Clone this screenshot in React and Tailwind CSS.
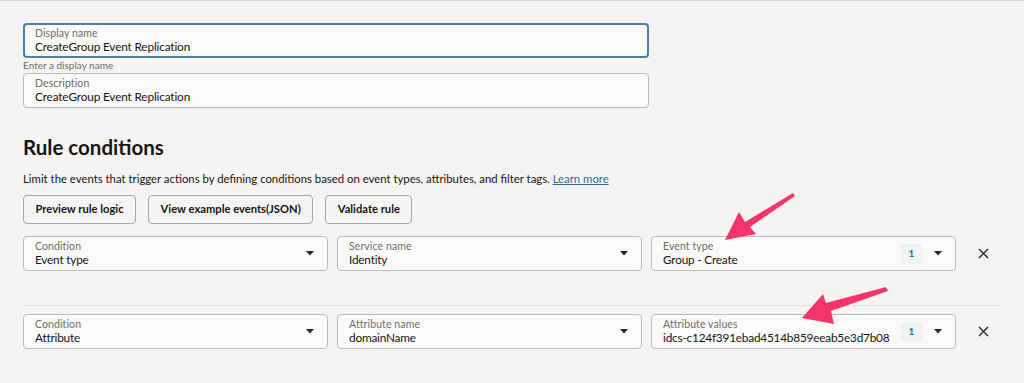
import React from 'react';

const FONT = { fontFamily: 'Lato, "Noto Sans", Arial, sans-serif' };

function Caret() {
    return (
        <svg width="8" height="5" viewBox="0 0 8 5" className="shrink-0">
            <path d="M0 0 L8 0 L4 4.5 Z" fill="#2a2825" />
        </svg>
    );
}

function TextField({ label, value, focused }) {
    return (
        <div
            className={`w-[626px] h-[35px] rounded-[4px] bg-[#fafaf9] flex flex-col justify-center ${focused ? 'border-2 border-[#4d7fa3] pl-[10px]' : 'border border-[#bdbbb7] pl-[11px]'}`}
        >
            <span className="text-[10.5px] leading-[12px] tracking-[0.1px] text-[#6f6c68]">{label}</span>
            <span className="text-[11.8px] leading-[15px] tracking-[-0.15px] text-[#161513]">{value}</span>
        </div>
    );
}

function SelectField({ label, value, count }) {
    return (
        <div className="w-[305px] h-[35px] rounded-[4px] border border-[#bdbbb7] bg-[#fafaf9] flex items-center pl-[11px] pr-[13px]">
            <div className="flex-1 flex flex-col justify-center min-w-0">
                <span className="text-[10.5px] leading-[12px] tracking-[0.1px] text-[#6f6c68]">{label}</span>
                <span className="text-[11.8px] leading-[15px] tracking-[-0.2px] text-[#161513] whitespace-nowrap overflow-hidden">{value}</span>
            </div>
            {count && (
                <span className="w-[21px] h-[20px] ml-[4px] mr-[12px] shrink-0 rounded-[3px] bg-[#eef3f5] text-[#2b6c8c] text-[10px] font-bold flex items-center justify-center">
                    {count}
                </span>
            )}
            <Caret />
        </div>
    );
}

function RemoveButton() {
    return (
        <button className="w-[20px] h-[20px] ml-[8px] flex items-center justify-center">
            <svg width="11" height="11" viewBox="0 0 11 11">
                <path d="M1 1 L10 10 M10 1 L1 10" stroke="#2a2825" strokeWidth="1.4" fill="none" />
            </svg>
        </button>
    );
}

function ConditionRow({ fields }) {
    return (
        <div className="flex items-center gap-[9px]">
            {fields.map(f => (
                <SelectField key={f.label} {...f} />
            ))}
            <RemoveButton />
        </div>
    );
}

export default function App() {
    return (
        <div className="relative w-[1024px] h-[383px] overflow-hidden bg-[#f5f4f2] border-t border-[#d6d4d1]" style={FONT}>
            <div className="pl-[23px] pt-[22px]">
                {/* Display name */}
                <TextField label="Display name" value="CreateGroup Event Replication" focused />
                <p className="text-[10px] leading-[15px] text-[#6f6c68]">Enter a display name</p>
                <TextField label="Description" value="CreateGroup Event Replication" />

                {/* Rule conditions */}
                <h2 className="mt-[27px] text-[20.5px] leading-[24px] font-bold text-[#161513]">Rule conditions</h2>
                <p className="mt-[12px] text-[11.35px] leading-[16px] text-[#161513]">
                    Limit the events that trigger actions by defining conditions based on event types, attributes, and filter tags.{' '}
                    <a href="#" className="text-[#2b6c8c] underline">Learn more</a>
                </p>

                <div className="mt-[8px] flex gap-[12px]">
                    {['Preview rule logic', 'View example events(JSON)', 'Validate rule'].map(label => (
                        <button
                            key={label}
                            className="h-[29px] px-[11.5px] rounded-[4px] border border-[#a8a6a2] bg-[#f5f4f2] text-[11.2px] font-bold text-[#161513]"
                        >
                            {label}
                        </button>
                    ))}
                </div>

                <div className="mt-[12px]">
                    <ConditionRow
                        fields={[
                            { label: 'Condition', value: 'Event type' },
                            { label: 'Service name', value: 'Identity' },
                            { label: 'Event type', value: 'Group - Create', count: '1' },
                        ]}
                    />
                </div>

                <div className="mt-[34px] w-[978px] border-t border-[#e4e2df]" />

                <div className="mt-[8px]">
                    <ConditionRow
                        fields={[
                            { label: 'Condition', value: 'Attribute' },
                            { label: 'Attribute name', value: 'domainName' },
                            { label: 'Attribute values', value: 'idcs-c124f391ebad4514b859eeab5e3d7b08', count: '1' },
                        ]}
                    />
                </div>
            </div>

            {/* annotation arrows */}
            <svg className="absolute left-0 top-0 pointer-events-none" width="1024" height="383">
                <path d="M793 192 L795 195 L750 226 L756 233 L725 239 L739 211 L745 221 Z" fill="#f5336d" />
                <path d="M886 286 L888 290 L831 310 L834 323 L802 317 L823 293 L826 302 Z" fill="#f5336d" />
            </svg>
        </div>
    );
}
